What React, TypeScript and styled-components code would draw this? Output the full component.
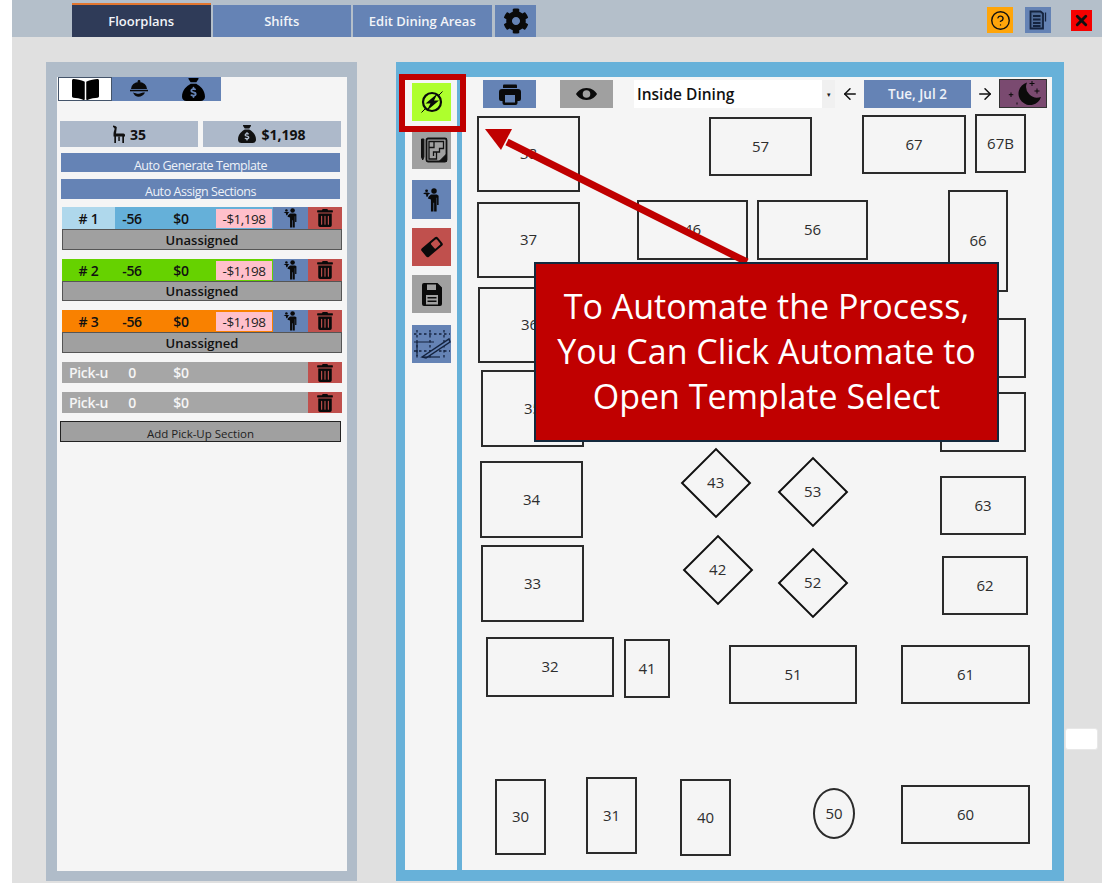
import React from "react";
import styled, { createGlobalStyle } from "styled-components";
import { FaBookOpen, FaTrashAlt, FaCog } from "react-icons/fa";
import { FaSackDollar } from "react-icons/fa6";
import { ArrowLeft, ArrowRight, CircleHelp, X } from "lucide-react";

const Global = createGlobalStyle`
  html, body { margin: 0; padding: 0; background: #fff; }
  body { font-family: "Open Sans", "Noto Sans", sans-serif; color: #111; overflow: hidden; }
  * { box-sizing: border-box; }
`;

const Page = styled.div`
  position: relative;
  width: 1114px;
  height: 883px;
  overflow: hidden;
  padding: 0 12px;
`;
const Shell = styled.div`
  width: 1090px;
  height: 883px;
  background: #e0e0e0;
  display: flex;
  flex-direction: column;
`;
const TopBar = styled.header`
  height: 37px;
  flex: none;
  background: #b4bfca;
  display: flex;
  align-items: flex-end;
  padding-left: 60px;
`;
const Tab = styled.div<{ $active?: boolean }>`
  width: 138.5px;
  height: ${(p) => (p.$active ? "34px" : "32px")};
  margin-right: 2px;
  background: ${(p) => (p.$active ? "#2f3b58" : "#6583b5")};
  border-top: ${(p) => (p.$active ? "2px solid #e2762f" : "none")};
  color: #f2f4f8;
  font-size: 13px;
  font-weight: 600;
  display: flex;
  align-items: center;
  justify-content: center;
  white-space: nowrap;
`;
const GearTab = styled.div`
  width: 41px;
  height: 32px;
  margin-left: 1.5px;
  background: #6583b5;
  display: flex;
  align-items: center;
  justify-content: center;
  color: #0a0a0a;
`;
const TopActions = styled.div`
  margin-left: auto;
  align-self: stretch;
  display: flex;
  align-items: center;
  padding-right: 10px;
`;
const TopIcon = styled.div<{ $bg: string; $w: number; $ml: number }>`
  width: ${(p) => p.$w}px;
  height: ${(p) => p.$w}px;
  margin-left: ${(p) => p.$ml}px;
  margin-top: 3px;
  background: ${(p) => p.$bg};
  display: flex;
  align-items: center;
  justify-content: center;
  color: #111;
`;
const Main = styled.main`
  display: flex;
  align-items: flex-start;
  padding: 25px 0 0 34px;
`;
const LeftPanel = styled.section`
  width: 311px;
  height: 819px;
  padding: 15px 10px 10px 11px;
  background: #b0bcc9;
`;
const LeftInner = styled.div`
  height: 100%;
  background: #f5f5f5;
  display: flex;
  flex-direction: column;
`;
const ViewTabs = styled.div`
  width: 163px;
  height: 24px;
  margin-left: 1px;
  display: flex;
  background: #6583b5;
`;
const ViewTab = styled.div<{ $active?: boolean; $w: number }>`
  width: ${(p) => p.$w}px;
  background: ${(p) => (p.$active ? "#fff" : "transparent")};
  border: ${(p) => (p.$active ? "1px solid #44546a" : "none")};
  display: flex;
  align-items: center;
  justify-content: center;
  color: #000;
`;
const Stats = styled.div`
  display: flex;
  gap: 5px;
  margin: 20px 0 0 3px;
`;
const Stat = styled.div`
  width: 138px;
  height: 26px;
  background: #adb9ca;
  display: flex;
  align-items: center;
  justify-content: center;
  gap: 5px;
  font-size: 14px;
  font-weight: 700;
  color: #111;
`;
const AutoButton = styled.div<{ $mt: number; $h: number }>`
  width: 279px;
  height: ${(p) => p.$h}px;
  margin: ${(p) => p.$mt}px 0 0 4px;
  background: #6583b5;
  color: #eef2f8;
  font-size: 12.5px;
  letter-spacing: -0.45px;
  line-height: 19px;
  padding-top: 3px;
  text-align: center;
  overflow: hidden;
  white-space: nowrap;
`;
const Section = styled.div<{ $mt: number }>`
  width: 280px;
  margin: ${(p) => p.$mt}px 0 0 5px;
`;
const SectionRow = styled.div<{ $bg: string; $h?: number }>`
  height: ${(p) => p.$h ?? 22}px;
  background: ${(p) => p.$bg};
  display: flex;
  font-size: 14px;
  letter-spacing: -0.3px;
  font-weight: 600;
  color: #111;
`;
const Cell = styled.div<{ $w: number; $bg?: string; $color?: string }>`
  width: ${(p) => p.$w}px;
  background: ${(p) => p.$bg ?? "transparent"};
  color: ${(p) => p.$color ?? "inherit"};
  display: flex;
  align-items: center;
  justify-content: center;
  overflow: hidden;
  white-space: nowrap;
`;
const Pink = styled.div`
  width: 56px;
  margin: 2px 1px 1px 3px;
  background: #ffc0cb;
  color: #222;
  font-weight: 400;
  font-size: 13.5px;
  letter-spacing: -0.5px;
  display: flex;
  align-items: center;
  justify-content: center;
`;
const ActionCell = styled.div<{ $bg: string; $w: number }>`
  width: ${(p) => p.$w}px;
  margin-left: auto;
  background: ${(p) => p.$bg};
  display: flex;
  align-items: center;
  justify-content: center;
  color: #0a0a0a;
  & + & { margin-left: 0; }
`;
const Assigned = styled.div<{ $h: number }>`
  height: ${(p) => p.$h}px;
  background: #a0a0a0;
  border: 1px solid #555;
  font-size: 13px;
  font-weight: 600;
  color: #111;
  display: flex;
  align-items: center;
  justify-content: center;
`;
const AddButton = styled.div`
  width: 281px;
  height: 21px;
  margin: 8px 0 0 3px;
  background: #a0a0a0;
  border: 1px solid #222;
  font-size: 11.5px;
  line-height: 17px;
  padding-top: 3px;
  color: #222;
  text-align: center;
  overflow: hidden;
  white-space: nowrap;
`;
const RightPanel = styled.section`
  width: 668px;
  height: 819px;
  margin-left: 39px;
  padding: 15px 12px 11px 9px;
  background: #67b1d9;
  display: flex;
`;
const SideBar = styled.nav`
  width: 52px;
  background: #f5f5f5;
  padding: 6px 0 0 7px;
  display: flex;
  flex-direction: column;
  flex: none;
`;
const SideButton = styled.div<{ $bg: string; $h: number; $mt: number }>`
  width: 39px;
  height: ${(p) => p.$h}px;
  margin-top: ${(p) => p.$mt}px;
  background: ${(p) => p.$bg};
  display: flex;
  align-items: center;
  justify-content: center;
  color: #0a0a0a;
`;
const Canvas = styled.div`
  position: relative;
  width: 590px;
  margin-left: 5px;
  background: #f5f5f5;
`;
const CanvasBar = styled.div`
  height: 31px;
  padding-top: 3px;
  padding-left: 21px;
  display: flex;
  align-items: flex-start;
`;
const BarButton = styled.div<{ $bg: string; $w: number; $ml: number }>`
  width: ${(p) => p.$w}px;
  height: 28px;
  margin-left: ${(p) => p.$ml}px;
  background: ${(p) => p.$bg};
  display: flex;
  align-items: center;
  justify-content: center;
  color: #0a0a0a;
  font-size: 13.5px;
  font-weight: 600;
`;
const DateButton = styled(BarButton)`
  color: #eef2f8;
`;
const NightButton = styled(BarButton)`
  height: 29px;
  margin-top: -1px;
  border: 1px solid #333;
`;
const SelectBox = styled.div`
  width: 201px;
  height: 28px;
  margin-left: 21px;
  display: flex;
  background: #fff;
`;
const SelectValue = styled.div`
  flex: 1;
  padding-left: 3px;
  font-size: 15.5px;
  font-weight: 600;
  color: #111;
  line-height: 29px;
`;
const SelectCaret = styled.div`
  width: 13px;
  background: #f0f0f0;
  display: flex;
  align-items: center;
  justify-content: center;
  font-size: 7px;
  color: #222;
`;
const ArrowSlot = styled.div<{ $w: number }>`
  width: ${(p) => p.$w}px;
  height: 28px;
  display: flex;
  align-items: center;
  justify-content: center;
  color: #111;
`;
const FloorTable = styled.div<{ $x: number; $y: number; $w: number; $h: number; $round?: boolean }>`
  position: absolute;
  left: ${(p) => p.$x - 462}px;
  top: ${(p) => p.$y - 77}px;
  width: ${(p) => p.$w}px;
  height: ${(p) => p.$h}px;
  border: 2px solid #2b2b2b;
  border-radius: ${(p) => (p.$round ? "50%" : "0")};
  padding-bottom: 2px;
  display: flex;
  align-items: center;
  justify-content: center;
  font-size: 15px;
  color: #2e2e2e;
`;
const Diamond = styled.div<{ $x: number; $y: number }>`
  position: absolute;
  left: ${(p) => p.$x - 462 - 25}px;
  top: ${(p) => p.$y - 77 - 25}px;
  width: 50px;
  height: 50px;
  border: 2px solid #111;
  transform: rotate(45deg);
  display: flex;
  align-items: center;
  justify-content: center;
`;
const DiamondLabel = styled.span`
  transform: rotate(-45deg) translateY(-1px);
  font-size: 15px;
  color: #2e2e2e;
`;
const GhostButton = styled.div`
  width: 33px;
  height: 22px;
  margin: 666px 0 0 1px;
  background: #fff;
  border: 1px solid #e8e8e8;
  border-radius: 3px;
`;
const Highlight = styled.div`
  position: absolute;
  left: 399px;
  top: 74px;
  width: 67px;
  height: 58px;
  border: 6px solid #c00000;
`;
const ArrowArt = styled.svg`
  position: absolute;
  left: 0;
  top: 0;
  width: 1114px;
  height: 883px;
  pointer-events: none;
`;
const Callout = styled.div`
  position: absolute;
  left: 534px;
  top: 262px;
  width: 465px;
  height: 180px;
  background: #c00000;
  border: 2px solid #13293d;
  color: #fff;
  font-family: "Open Sans", sans-serif;
  font-size: 34px;
  line-height: 45px;
  text-align: center;
  padding-top: 20px;
  white-space: nowrap;
`;

const Waiter = ({ w = 15, h = 20 }: { w?: number; h?: number }) => (
  <svg width={w} height={h} viewBox="0 0 15 22" fill="currentColor">
    <circle cx="9.800" cy="2.800" r="2.500" />
    <path d="M7 6h5.500l1.500 1v8.500h-1.400V9h-.4v12.500h-2.300V13.500h-.6v8H7v-11L4.200 9.600l.6-1.600z" />
    <path d="M0 4.800c1-1 5-1 6 0 .2.500-.6.800-1.200.9l-.8 2.300-1.200 0-.3-2.300C1.500 5.700 .2 5.400 0 4.800z" />
    <circle cx="3" cy="2.600" r="1.300" />
  </svg>
);
const Chair = () => (
  <svg width="13" height="18" viewBox="0 0 13 18" fill="#111">
    <path d="M1 .5c1.500 .2 3 .8 3.800 1.800L4 8.500h7.500A1.500 1.500 0 0 1 13 10v1.500h-1V18h-1.700v-6.500H4V18H2.300v-6.500H1.500V9C1.500 6 3 4.500 2.500 3.500 2.200 2.800 1.500 2.300 1 2z" />
    <path d="M6.300 11.500h1.500V16H6.300z" />
  </svg>
);
const Cloche = () => (
  <svg width="22" height="20" viewBox="0 0 22 20" fill="#0a0a0a">
    <circle cx="11" cy="2.500" r="1.400" />
    <path d="M3 10a8 7 0 0 1 16 0z" />
    <rect x="2" y="10.800" width="18" height="1.500" />
    <path d="M5 13.500c2 .5 4 1.500 6 1.300l4-1.300 2 0c-1 2.500-4 4.500-7 4.300-2.500-.2-4-2-5-4.300z" />
  </svg>
);
const Automate = () => (
  <svg width="26" height="26" viewBox="0 0 26 26" fill="none">
    <circle cx="13" cy="13" r="9" stroke="#0a0a0a" strokeWidth="2.200" />
    <path d="M2.500 23.500 L6.500 19.500 M19.500 6.500 L23.500 2.500" stroke="#0a0a0a" strokeWidth="1" />
    <path d="M18.500 4.500 L6.500 14.500 h5 l-4 7.500 L20 11.500 h-5z" fill="#0a0a0a" />
  </svg>
);
const Plan = () => (
  <svg width="32" height="32" viewBox="0 0 32 32" fill="none" stroke="#111">
    <path d="M5.500 5v18l1.200 3 1.200-3V5z" fill="#111" strokeWidth="1" />
    <rect x="10.500" y="4.500" width="20" height="23" rx="1.500" strokeWidth="1.800" />
    <path d="M13 7.500h14.500v7h-4v3.500h-3v7h-7.500zM18 7.500v6h-5M20.500 18h-3v4" strokeWidth="1.300" />
    <path d="M23 27.500l7.500-7.500v7.500z" fill="#111" strokeWidth="1" />
  </svg>
);
const Measure = () => (
  <svg width="38" height="32" viewBox="0 0 38 32" fill="none" stroke="#14233f">
    <path d="M1 6h36M1 23h36M4 2v28M17 2v28M31 2v28" strokeWidth="1.300" strokeDasharray="2.500 2.500" />
    <path d="M1 14h20M4 14v14" strokeWidth="1.200" />
    <path d="M9 29L36 11l1 3L13 30z" fill="#6583b5" strokeWidth="1.500" />
    <path d="M9 29h18" strokeWidth="1.200" />
  </svg>
);
const Moon = () => (
  <svg width="46" height="27" viewBox="0 0 46 27" fill="#0b0b0b">
    <path d="M27 2.500A11.500 11.500 0 1 0 41 17 A11 11 0 0 1 27 2.500z" />
    <path d="M32 1v5M29.500 3.500h5M37 8.500v5M34.500 11h5M11 12.500v4.500M8.800 14.700h4.500M17 22.500v2" stroke="#0b0b0b" strokeWidth="1" fill="none" />
  </svg>
);
const Notes = () => (
  <svg width="19" height="20" viewBox="0 0 19 20" fill="none" stroke="#14233f" strokeWidth="1.800">
    <path d="M1.500 1.500h10l2.500 2v15h-12.500z" fill="#4e6a96" />
    <path d="M4 6h7.500M4 9.500h7.500M4 13h7.500M4 16h7.500" />
    <path d="M16.500 2.500v9" strokeWidth="1.300" />
  </svg>
);
const Printer = () => (
  <svg width="22" height="21" viewBox="0 0 22 21" fill="#0a0a0a">
    <path d="M5 0.500h12a1 1 0 0 1 1 1V4H4V1.500a1 1 0 0 1 1-1z" />
    <path fillRule="evenodd" d="M3 5h16a3 3 0 0 1 3 3v7a2 2 0 0 1-2 2h-1.500v2a2 2 0 0 1-2 2h-11a2 2 0 0 1-2-2v-2H2a2 2 0 0 1-2-2V8a3 3 0 0 1 3-3zM6 11v7.500h10V11z" />
  </svg>
);
const Eye = () => (
  <svg width="21" height="12" viewBox="0 0 21 12" fill="#0a0a0a">
    <path fillRule="evenodd" d="M10.500 0C16 0 19.500 3.500 21 6c-1.500 2.500-5 6-10.500 6S1.500 8.500 0 6C1.500 3.500 5 0 10.500 0zm0 2.200a3.800 3.800 0 1 0 0 7.600 3.800 3.800 0 0 0 0-7.600z" />
  </svg>
);
const Eraser = () => (
  <svg width="24" height="22" viewBox="0 0 24 22">
    <g transform="rotate(-40 12 11)">
      <rect x="1.500" y="5.500" width="21" height="11" rx="2" fill="#0a0a0a" />
      <rect x="13" y="7.500" width="7.500" height="7" rx="1" fill="#c0504d" />
    </g>
  </svg>
);
const Floppy = () => (
  <svg width="20" height="23" viewBox="0 0 20 23" fill="#0a0a0a">
    <path fillRule="evenodd" d="M2 0h13.500L20 4.500V21a2 2 0 0 1-2 2H2a2 2 0 0 1-2-2V2a2 2 0 0 1 2-2zM5 1.500v5.500h9V1.500zM4 12v9.500h12V12z" />
    <path d="M5.500 14h9v1.500h-9zM5.500 17.500h9V19h-9z" fill="#0a0a0a" />
  </svg>
);

const sections = [
  { num: "# 1", light: "#afd8ec", bg: "#65b0d9", mt: 8, h: 21 },
  { num: "# 2", light: "#66d200", bg: "#66d200", mt: 9, h: 20 },
  { num: "# 3", light: "#f98100", bg: "#f98100", mt: 9, h: 21 },
];
const tables = [
  ["38", 477, 116, 103, 76], ["57", 709, 117, 103, 59], ["67", 862, 115, 104, 59], ["67B", 975, 114, 51, 59],
  ["37", 477, 202, 103, 76], ["46", 637, 200, 111, 60], ["56", 757, 200, 111, 60], ["66", 948, 190, 60, 102],
  ["36", 478, 287, 103, 76], ["65", 940, 318, 86, 60], ["35", 481, 370, 103, 77], ["64", 940, 392, 86, 60],
  ["34", 480, 461, 103, 77], ["63", 940, 476, 86, 59], ["33", 481, 545, 103, 77], ["62", 942, 556, 86, 59],
  ["32", 486, 637, 128, 60], ["41", 624, 639, 46, 59], ["51", 729, 645, 128, 59], ["61", 901, 645, 129, 59],
  ["30", 495, 779, 51, 76], ["31", 586, 777, 51, 77], ["40", 680, 779, 51, 77], ["60", 901, 785, 129, 59],
] as const;
const diamonds = [["43", 716, 483], ["53", 813, 492], ["42", 718, 570], ["52", 813, 583]] as const;

export default function App() {
  return (
    <Page>
      <Global />
      <Shell>
        <TopBar>
          <Tab $active>Floorplans</Tab>
          <Tab>Shifts</Tab>
          <Tab>Edit Dining Areas</Tab>
          <GearTab><FaCog size={26} /></GearTab>
          <TopActions>
            <TopIcon $bg="#ffa50a" $w={26} $ml={0}><CircleHelp size={21} strokeWidth={1.600} /></TopIcon>
            <TopIcon $bg="#6583b5" $w={26} $ml={12}><Notes /></TopIcon>
            <TopIcon $bg="#f50000" $w={21} $ml={20}><X size={17} strokeWidth={4} /></TopIcon>
          </TopActions>
        </TopBar>
        <Main>
          <LeftPanel>
            <LeftInner>
              <ViewTabs>
                <ViewTab $active $w={54}><FaBookOpen size={27} /></ViewTab>
                <ViewTab $w={54}><Cloche /></ViewTab>
                <ViewTab $w={55}><FaSackDollar size={23} /></ViewTab>
              </ViewTabs>
              <Stats>
                <Stat><Chair />35</Stat>
                <Stat><FaSackDollar size={18} />$1,198</Stat>
              </Stats>
              <AutoButton $mt={6} $h={19}>Auto Generate Template</AutoButton>
              <AutoButton $mt={7} $h={20}>Auto Assign Sections</AutoButton>
              {sections.map((s) => (
                <Section key={s.num} $mt={s.mt}>
                  <SectionRow $bg={s.bg}>
                    <Cell $w={53} $bg={s.light}>{s.num}</Cell>
                    <Cell $w={34}>-56</Cell>
                    <Cell $w={64}>$0</Cell>
                    <Pink>-$1,198</Pink>
                    <ActionCell $bg="#6583b5" $w={35}><Waiter /></ActionCell>
                    <ActionCell $bg="#c0504d" $w={34}><FaTrashAlt size={18} /></ActionCell>
                  </SectionRow>
                  <Assigned $h={s.h}>Unassigned</Assigned>
                </Section>
              ))}
              {[9, 9].map((mt, i) => (
                <Section key={i} $mt={mt}>
                  <SectionRow $bg="#a6a6a6" $h={21}>
                    <Cell $w={53} $color="#f5f5f5">Pick-u</Cell>
                    <Cell $w={34} $color="#f5f5f5">0</Cell>
                    <Cell $w={64} $color="#f5f5f5">$0</Cell>
                    <ActionCell $bg="#c0504d" $w={34}><FaTrashAlt size={18} /></ActionCell>
                  </SectionRow>
                </Section>
              ))}
              <AddButton>Add Pick-Up Section</AddButton>
            </LeftInner>
          </LeftPanel>
          <RightPanel>
            <SideBar>
              <SideButton $bg="#aeff2d" $h={38} $mt={0}><Automate /></SideButton>
              <SideButton $bg="#a0a0a0" $h={38} $mt={10}><Plan /></SideButton>
              <SideButton $bg="#6583b5" $h={39} $mt={11}><Waiter w={17} h={24} /></SideButton>
              <SideButton $bg="#c0504d" $h={38} $mt={9}><Eraser /></SideButton>
              <SideButton $bg="#a0a0a0" $h={38} $mt={9}><Floppy /></SideButton>
              <SideButton $bg="#6583b5" $h={38} $mt={12}><Measure /></SideButton>
            </SideBar>
            <Canvas>
              <CanvasBar>
                <BarButton $bg="#6583b5" $w={53} $ml={0}><Printer /></BarButton>
                <BarButton $bg="#a0a0a0" $w={53} $ml={24}><Eye /></BarButton>
                <SelectBox>
                  <SelectValue>Inside Dining</SelectValue>
                  <SelectCaret>▾</SelectCaret>
                </SelectBox>
                <ArrowSlot $w={29}><ArrowLeft size={18} /></ArrowSlot>
                <DateButton $bg="#6583b5" $w={107} $ml={0}>Tue, Jul 2</DateButton>
                <ArrowSlot $w={28}><ArrowRight size={18} /></ArrowSlot>
                <NightButton $bg="#7a4a70" $w={48} $ml={0}><Moon /></NightButton>
              </CanvasBar>
              {tables.map(([n, x, y, w, h]) => (
                <FloorTable key={n} $x={x} $y={y} $w={w} $h={h}>{n}</FloorTable>
              ))}
              <FloorTable $x={813} $y={788} $w={42} $h={51} $round>50</FloorTable>
              {diamonds.map(([n, x, y]) => (
                <Diamond key={n} $x={x} $y={y}><DiamondLabel>{n}</DiamondLabel></Diamond>
              ))}
            </Canvas>
          </RightPanel>
          <GhostButton />
        </Main>
      </Shell>
      <Highlight />
      <ArrowArt viewBox="0 0 1114 883">
        <path d="M507 142 L747 262" stroke="#c00000" strokeWidth="7" />
        <path d="M485 129 L512 129 L501 150 Z" fill="#c00000" />
      </ArrowArt>
      <Callout>
        To Automate the Process,<br />
        You Can Click Automate to<br />
        Open Template Select
      </Callout>
    </Page>
  );
}
